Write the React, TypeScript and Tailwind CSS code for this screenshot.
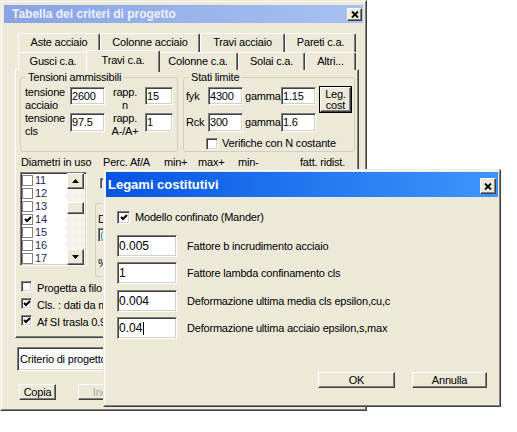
import React from 'react';

// finestra stile Windows classico
const sunken =
  'bg-white border border-t-[#808080] border-l-[#808080] border-r-white border-b-white shadow-[inset_1px_1px_0_#404040,inset_-1px_-1px_0_#d4d0c8]';
const raised =
  'bg-[#ece9d8] border border-t-white border-l-white border-r-[#404040] border-b-[#404040] shadow-[inset_-1px_-1px_0_#808080]';

function CheckMark() {
  return (
    <svg width="8" height="7" viewBox="0 0 8 7">
      <polyline points="1,3 3,5 7,1" fill="none" stroke="#000" strokeWidth="2" />
    </svg>
  );
}

function Checkbox({ checked, size }: { checked?: boolean; size: string }) {
  return <div className={`${sunken} ${size} shrink-0 flex items-center justify-center`}>{checked && <CheckMark />}</div>;
}

function CloseBtn({ className }: { className: string }) {
  return (
    <div className={`${raised} ${className} flex items-center justify-center`}>
      <svg width="8" height="7" viewBox="0 0 8 7">
        <path d="M1 0.5 L7 6.5 M7 0.5 L1 6.5" stroke="#000" strokeWidth="1.8" />
      </svg>
    </div>
  );
}

function Field({ value, className }: { value: string; className: string }) {
  return <div className={`${sunken} ${className} flex items-center pl-[1px] shrink-0`}>{value}</div>;
}

const row1 = [
  { label: 'Aste acciaio', w: 'w-[82px]' },
  { label: 'Colonne acciaio', w: 'w-[100px]' },
  { label: 'Travi acciaio', w: 'w-[85px]' },
  { label: 'Pareti c.a.', w: 'w-[71px]' },
];

const row2 = [
  { label: 'Gusci c.a.', w: 'w-[70px]' },
  { label: 'Travi c.a.', w: 'w-[74px]', selected: true },
  { label: 'Colonne c.a.', w: 'w-[80px]' },
  { label: 'Solai c.a.', w: 'w-[67px]' },
  { label: 'Altri...', w: 'w-[51px]' },
];

const tabBase =
  'bg-[#ece9d8] border-t border-l border-white border-r border-r-[#404040] shadow-[inset_-1px_0_0_#808080] rounded-t-[2px] flex justify-center';

const diametri = [
  { d: '11', c: false },
  { d: '12', c: false },
  { d: '13', c: false },
  { d: '14', c: true },
  { d: '15', c: false },
  { d: '16', c: false },
  { d: '17', c: false },
];

const legami = [
  { v: '0.005', label: 'Fattore b incrudimento acciaio', mt: 'mt-[11px]' },
  { v: '1', label: 'Fattore lambda confinamento cls', mt: 'mt-[5px]' },
  { v: '0.004', label: 'Deformazione ultima media cls epsilon,cu,c', mt: 'mt-[6px]' },
  { v: '0.04', label: 'Deformazione ultima acciaio epsilon,s,max', mt: 'mt-[5px]', caret: true },
];

export default function App() {
  return (
    <div className="relative w-[517px] h-[432px] bg-white overflow-hidden font-['Liberation_Sans',Arial,sans-serif] text-[11px] leading-[13px] tracking-[-0.2px] text-black">
      {/* Tabella dei criteri di progetto */}
      <div className="w-[367px] h-[411px] border border-t-[#ece9d8] border-l-[#ece9d8] border-r-[#404040] border-b-[#404040]">
        <div className="h-full bg-[#ece9d8] border border-t-white border-l-white border-r-[#808080] border-b-[#808080] px-[2px] pt-[3px]">
          <div className="h-[18px] flex items-center justify-between bg-linear-to-r from-[#8ba3e6] to-[#a6c2f0] pl-[8px] pr-[1px]">
            <span className="text-[12px] font-bold tracking-normal text-[#eef2fc]">Tabella dei criteri di progetto</span>
            <CloseBtn className="w-[15px] h-[13px]" />
          </div>

          {/* schede */}
          <div className="ml-[14px] mt-[10px] w-[338px]">
            <div className="flex h-[19px]">
              {row1.map((t) => (
                <div key={t.label} className={`${tabBase} ${t.w} h-[19px] pt-[2px] whitespace-nowrap`}>
                  {t.label}
                </div>
              ))}
            </div>
            <div className="flex items-end h-[18px]">
              {row2.map((t) => (
                <div
                  key={t.label}
                  className={`${tabBase} ${t.w} whitespace-nowrap ${
                    t.selected ? 'h-[22px] -mb-[2px] -mx-[2px] pt-[3px] relative z-10' : 'h-[18px] pt-[2px]'
                  }`}
                >
                  {t.label}
                </div>
              ))}
            </div>
          </div>

          {/* pannello Travi c.a. */}
          <div className="ml-[11px] -mt-[1px] w-[344px] h-[269px] border border-t-white border-l-white border-r-[#404040] border-b-[#404040] shadow-[inset_-1px_-1px_0_#808080] pl-[4px] pt-[1px]">
            <div className="flex">
              <fieldset className="w-[157px] h-[81px] border border-[#d0d0bf] rounded-[3px] px-[4px]">
                <legend className="ml-[1px] px-[2px]">Tensioni ammissibili</legend>
                <div className="mt-[2px]">
                  <div className="flex h-[26px]">
                    <div className="w-[45px]">
                      tensione
                      <br />
                      acciaio
                    </div>
                    <Field value="2600" className="w-[35px] h-[18px] mt-[1px]" />
                    <div className="w-[40px] text-center">
                      rapp.
                      <br />n
                    </div>
                    <Field value="15" className="w-[28px] h-[18px] mt-[1px]" />
                  </div>
                  <div className="flex h-[26px]">
                    <div className="w-[45px]">
                      tensione
                      <br />
                      cls
                    </div>
                    <Field value="97.5" className="w-[35px] h-[19px] mt-[1px]" />
                    <div className="w-[40px] text-center">
                      rapp.
                      <br />
                      A-/A+
                    </div>
                    <Field value="1" className="w-[28px] h-[19px] mt-[1px]" />
                  </div>
                </div>
              </fieldset>

              <fieldset className="ml-[5px] w-[172px] h-[81px] border border-[#d0d0bf] rounded-[3px] px-[2px]">
                <legend className="ml-[3px] px-[2px]">Stati limite</legend>
                <div className="mt-[2px] flex">
                  <div className="flex flex-col">
                    <div className="flex items-center h-[18px] mt-[1px]">
                      <span className="w-[22px]">fyk</span>
                      <Field value="4300" className="w-[35px] h-[18px]" />
                      <span className="w-[38px] pl-[2px]">gamma</span>
                      <Field value="1.15" className="w-[35px] h-[18px]" />
                    </div>
                    <div className="flex items-center h-[19px] mt-[8px]">
                      <span className="w-[22px]">Rck</span>
                      <Field value="300" className="w-[35px] h-[19px]" />
                      <span className="w-[38px] pl-[2px]">gamma</span>
                      <Field value="1.6" className="w-[35px] h-[19px]" />
                    </div>
                  </div>
                  <div className="ml-[3px] w-[33px] h-[27px] border border-black">
                    <div className={`${raised} h-full flex items-center justify-center text-center leading-[11px]`}>
                      Leg.
                      <br />
                      cost
                    </div>
                  </div>
                </div>
                <div className="flex items-center mt-[5px] ml-[20px]">
                  <Checkbox size="w-[12px] h-[12px]" />
                  <span className="ml-[4px]">Verifiche con N costante</span>
                </div>
              </fieldset>
            </div>

            {/* intestazione */}
            <div className="mt-[4px] flex whitespace-nowrap">
              <span className="w-[83px] pl-[1px]">Diametri in uso</span>
              <span className="w-[61px]">Perc. Af/A</span>
              <span className="w-[34px]">min+</span>
              <span className="w-[40px]">max+</span>
              <span className="w-[62px]">min-</span>
              <span>fatt. ridist.</span>
            </div>

            <div className="mt-[3px] flex h-[105px]">
              {/* elenco diametri */}
              <div className={`${sunken} w-[67px] h-[94px] flex`}>
                <div className="w-[46px] pt-[1px]">
                  {diametri.map((r) => (
                    <div key={r.d} className="h-[13px] flex items-center">
                      <div className="ml-[1px] w-[11px] h-[11px] border border-[#808080] bg-white flex items-center justify-center">
                        {r.c && <CheckMark />}
                      </div>
                      <span className="ml-[2px] text-[#2b1f5c]">{r.d}</span>
                    </div>
                  ))}
                </div>
                <div className="w-[17px] flex flex-col bg-[repeating-conic-gradient(#ece9d8_0%_25%,#ffffff_0%_50%)] bg-[length:2px_2px]">
                  <div className={`${raised} h-[16px] flex items-center justify-center`}>
                    <svg width="7" height="4" viewBox="0 0 7 4">
                      <polygon points="0,4 3.5,0 7,4" fill="#000" />
                    </svg>
                  </div>
                  <div className={`${raised} h-[12px] mt-[13px]`} />
                  <div className="flex-1" />
                  <div className={`${raised} h-[16px] flex items-center justify-center`}>
                    <svg width="7" height="4" viewBox="0 0 7 4">
                      <polygon points="0,0 7,0 3.5,4" fill="#000" />
                    </svg>
                  </div>
                </div>
              </div>

              {/* controlli coperti in parte dal dialogo */}
              <div className="ml-[8px] flex flex-col">
                <div className="ml-[5px] mt-[6px]">
                  <Checkbox size="w-[11px] h-[11px]" />
                </div>
                <div className="mt-[14px] w-[150px] h-[74px] border border-[#d0d0bf] rounded-[3px] pl-[2px] pt-[9px]">
                  <div>Diametro</div>
                  <Field value="(" className="mt-[2px] w-[60px] h-[14px] text-[#2080a0]" />
                  <div className="mt-[15px]">%</div>
                </div>
              </div>
            </div>

            <div className="mt-[3px] whitespace-nowrap">
              <div className="flex items-start h-[17px]">
                <div className="ml-[1px] mt-[1px]">
                  <Checkbox size="w-[11px] h-[11px]" />
                </div>
                <span className="ml-[5px] mt-[2px]">Progetta a filo</span>
              </div>
              <div className="flex items-start h-[17px]">
                <div className="ml-[1px] mt-[1px]">
                  <Checkbox checked size="w-[11px] h-[11px]" />
                </div>
                <span className="ml-[5px] mt-[2px]">Cls. : dati da modello</span>
              </div>
              <div className="flex items-start h-[17px]">
                <div className="ml-[1px] mt-[1px]">
                  <Checkbox checked size="w-[11px] h-[11px]" />
                </div>
                <span className="ml-[5px] mt-[2px]">Af SI trasla 0.9 d</span>
              </div>
            </div>
          </div>

          <div className={`${sunken} ml-[13px] mt-[9px] w-[335px] h-[24px] flex items-center pl-[2px] whitespace-nowrap`}>
            Criterio di progetto corrente
          </div>

          <div className="mt-[13px] flex">
            <div className={`${raised} ml-[15px] w-[37px] h-[16px] flex items-center justify-center`}>Copia</div>
            <div className={`${raised} ml-[22px] w-[60px] h-[16px] flex items-center justify-center text-[#aca899]`}>Incolla</div>
          </div>
        </div>
      </div>

      {/* Legami costitutivi */}
      <div className="absolute left-[103px] top-[169px] w-[398px] h-[238px] border border-t-[#ece9d8] border-l-[#ece9d8] border-r-[#404040] border-b-[#404040]">
        <div className="h-full bg-[#ece9d8] border border-t-white border-l-white border-r-[#808080] border-b-[#808080] p-[1px]">
          <div className="h-[25px] flex items-center justify-between bg-linear-to-r from-[#0654e2] to-[#3e95fc] pl-[2px] pr-[2px]">
            <span className="text-[13px] font-bold tracking-normal text-white">Legami costitutivi</span>
            <CloseBtn className="w-[16px] h-[16px] mt-[3px]" />
          </div>

          <div className="pl-[11px] pr-[11px]">
            <div className="mt-[14px] flex items-center">
              <Checkbox checked size="w-[13px] h-[13px]" />
              <span className="ml-[5px]">Modello confinato (Mander)</span>
            </div>

            {legami.map((r) => (
              <div key={r.label} className={`${r.mt} flex items-center`}>
                <div className={`${sunken} w-[60px] h-[22px] flex items-center pl-[1px] text-[12px] tracking-normal`}>
                  {r.v}
                  {r.caret && <span className="ml-[1px] w-[1px] h-[13px] bg-black" />}
                </div>
                <span className="ml-[10px] whitespace-nowrap">{r.label}</span>
              </div>
            ))}

            <div className="mt-[33px] flex justify-end">
              <div className={`${raised} w-[77px] h-[16px] flex items-center justify-center`}>OK</div>
              <div className={`${raised} ml-[17px] w-[75px] h-[16px] flex items-center justify-center`}>Annulla</div>
            </div>
          </div>
        </div>
      </div>
    </div>
  );
}
